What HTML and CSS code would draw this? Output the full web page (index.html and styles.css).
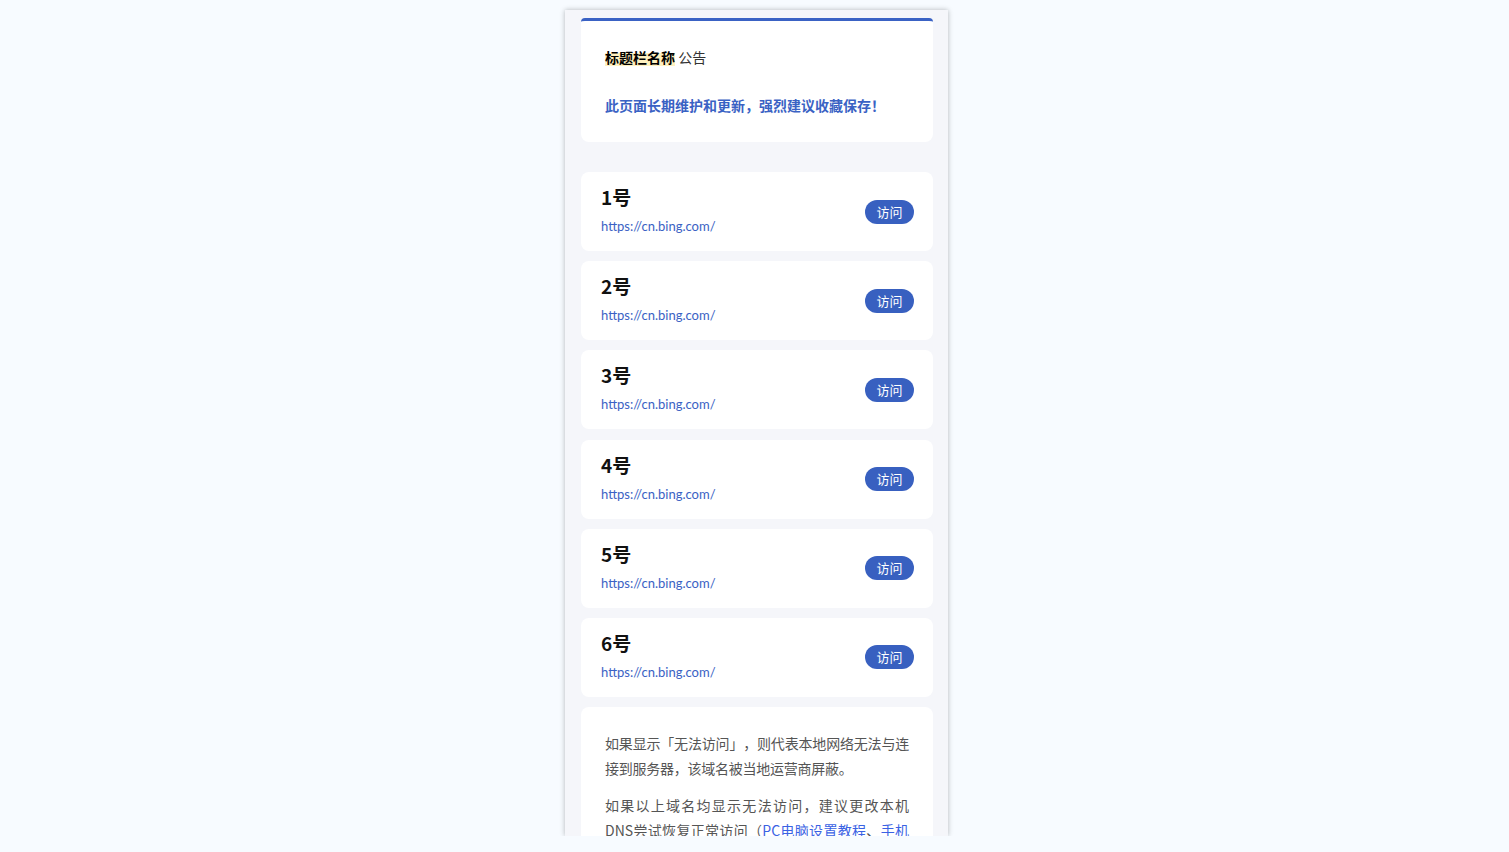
FILE: index.html
```html
<!DOCTYPE html>
<html lang="zh-CN">
<head>
<meta charset="utf-8">
<title>公告</title>
<link rel="stylesheet" href="styles.css">
</head>
<body>
<div class="page">
  <div class="frame">
    <section class="notice">
      <p class="notice-title"><span class="hl">标题栏名称</span> 公告</p>
      <p class="notice-tip">此页面长期维护和更新，强烈建议收藏保存！</p>
    </section>
    <div class="list">
      <div class="item"><div class="info"><div class="name">1号</div><div class="url">https://cn.bing.com/</div></div><a class="btn">访问</a></div>
      <div class="item"><div class="info"><div class="name">2号</div><div class="url">https://cn.bing.com/</div></div><a class="btn">访问</a></div>
      <div class="item"><div class="info"><div class="name">3号</div><div class="url">https://cn.bing.com/</div></div><a class="btn">访问</a></div>
      <div class="item"><div class="info"><div class="name">4号</div><div class="url">https://cn.bing.com/</div></div><a class="btn">访问</a></div>
      <div class="item"><div class="info"><div class="name">5号</div><div class="url">https://cn.bing.com/</div></div><a class="btn">访问</a></div>
      <div class="item"><div class="info"><div class="name">6号</div><div class="url">https://cn.bing.com/</div></div><a class="btn">访问</a></div>
    </div>
    <section class="help">
      <p class="tight">如果显示「无法访问」，则代表本地网络无法与连接到服务器，该域名被当地运营商屏蔽。</p>
      <p>如果以上域名均显示无法访问，建议更改本机DNS尝试恢复正常访问（<a class="link">PC电脑设置教程</a>、<a class="link">手机设置教程</a>）。</p>
    </section>
  </div>
</div>
</body>
</html>
```
FILE: styles.css
```css
html, body {
  margin: 0;
  padding: 0;
  background: #f7fbff;
}
body {
  font-family: "Noto Sans CJK SC", "Noto Sans", sans-serif;
}
.page {
  display: flex;
  justify-content: center;
  padding: 10px 0 0 4px;
}
.frame {
  width: 383px;
  height: 826px;
  box-sizing: border-box;
  padding: 8px 15px 0 16px;
  background: #f5f6fa;
  box-shadow: 0 0 5px rgba(0, 0, 0, 0.28);
  overflow: hidden;
}
.notice {
  background: #fff;
  border-top: 3px solid #3a62c4;
  border-radius: 4px 4px 8px 8px;
  padding: 23px 24px 24px;
}
.notice p {
  margin: 0;
  font-size: 14px;
  line-height: 26px;
}
.notice-title {
  color: #333;
}
.hl {
  font-weight: 700;
  color: #000;
  background: linear-gradient(transparent 28%, #fff1bf 28%, #fff1bf 94%, transparent 94%);
}
.notice-tip {
  margin-top: 22px !important;
  color: #3a62c4;
  font-weight: 700;
}
.list {
  margin-top: 30px;
  display: flex;
  flex-direction: column;
  gap: 10.2px;
}
.item {
  height: 79px;
  box-sizing: border-box;
  background: #fff;
  border-radius: 8px;
  padding: 0 19px 0 20px;
  display: flex;
  align-items: center;
  justify-content: space-between;
}
.info {
  align-self: flex-start;
  padding-top: 12px;
  display: flex;
  flex-direction: column;
}
.name {
  font-size: 19px;
  font-weight: 700;
  line-height: 26px;
  color: #111;
}
.url {
  font-family: Lato, "Noto Sans", sans-serif;
  font-size: 13px;
  line-height: 18px;
  color: #3a62c4;
  margin-top: 7px;
}
.btn {
  width: 49px;
  height: 24px;
  border-radius: 12px;
  background: #3860c0;
  color: #fff;
  font-size: 13px;
  line-height: 24px;
  text-align: center;
}
.help {
  margin-top: 10px;
  background: #fff;
  border-radius: 8px;
  padding: 24px;
}
.help p {
  margin: 0 0 12px;
  font-size: 14px;
  line-height: 25px;
  color: #555;
  text-align: justify;
  text-spacing-trim: space-all;
}
.help .tight {
  letter-spacing: -0.25px;
}
.link {
  color: #3a62e4;
}
```
